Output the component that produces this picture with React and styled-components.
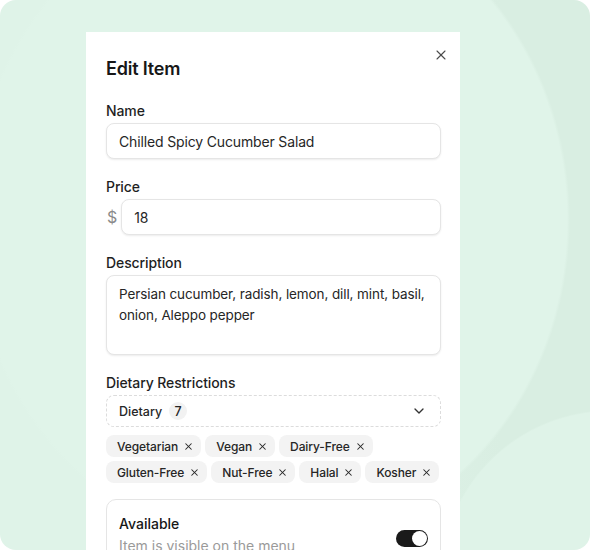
import React from "react";
import styled, { createGlobalStyle } from "styled-components";
import { X, ChevronDown } from "lucide-react";

const GlobalStyle = createGlobalStyle`
  html, body {
    margin: 0;
    padding: 0;
    background: #ffffff;
  }
  body {
    font-family: Inter, "Noto Sans", sans-serif;
    color: #171717;
    -webkit-font-smoothing: antialiased;
  }
`;

const Frame = styled.div`
  width: 590px;
  height: 550px;
  box-sizing: border-box;
  border-radius: 16px;
  overflow: hidden;
  padding: 32px 0 0 86px;
  background:
    radial-gradient(ellipse 300px 330px at 270px 220px, #e0f4e9 0 99%, transparent 100%),
    radial-gradient(circle 170px at 610px 580px, #dff3e8 0 99%, transparent 100%),
    linear-gradient(to right, #dff3e8 0 62%, #d9eee2 85%);
`;

const Dialog = styled.div`
  position: relative;
  width: 374px;
  height: 560px;
  box-sizing: border-box;
  background: #ffffff;
  padding: 23px 19px 0 20px;
  display: flex;
  flex-direction: column;
`;

const Close = styled.button`
  position: absolute;
  top: 15px;
  right: 11px;
  border: 0;
  background: none;
  padding: 0;
  display: flex;
  color: #4a4a4a;
  cursor: pointer;
`;

const Title = styled.h2`
  margin: 0 0 18px;
  font-size: 18px;
  line-height: 28px;
  font-weight: 600;
  letter-spacing: -0.2px;
  color: #171717;
`;

const Field = styled.div`
  display: flex;
  flex-direction: column;
  gap: 2px;
  margin-bottom: ${(p) => p.$gap ?? 18}px;
`;

const Label = styled.label`
  font-size: 14px;
  line-height: 20px;
  font-weight: 500;
  letter-spacing: -0.1px;
  color: #1f1f1f;
`;

const inputBase = `
  box-sizing: border-box;
  width: 100%;
  border: 1px solid #e5e5e5;
  border-radius: 8px;
  background: #ffffff;
  box-shadow: 0 1px 2px rgba(0, 0, 0, 0.08);
  font-family: Inter, "Noto Sans", sans-serif;
  color: #262626;
  padding: 0 12px;
  outline: none;
`;

const Input = styled.input`
  ${inputBase}
  height: 36px;
  font-size: 14px;
  letter-spacing: -0.15px;
`;

const PriceRow = styled.div`
  display: flex;
  align-items: center;
  gap: 4px;
`;

const Currency = styled.span`
  font-size: 16px;
  color: #8a8a8a;
  padding-left: 1px;
`;

const TextArea = styled.textarea`
  ${inputBase}
  height: 80px;
  padding: 8px 12px;
  font-size: 13.5px;
  line-height: 21px;
  letter-spacing: -0.1px;
  resize: none;
`;

const Select = styled.div`
  box-sizing: border-box;
  height: 32px;
  border: 1px dashed #dcdcdc;
  border-radius: 8px;
  display: flex;
  align-items: center;
  padding: 0 13px 0 12px;
  gap: 7px;
  font-size: 12.5px;
  font-weight: 500;
  color: #262626;
`;

const Count = styled.span`
  width: 18px;
  height: 18px;
  border-radius: 50%;
  background: #f2f2f2;
  display: flex;
  align-items: center;
  justify-content: center;
  font-size: 12.5px;
  font-weight: 500;
`;

const Chevron = styled(ChevronDown)`
  margin-left: auto;
  color: #333;
`;

const Chips = styled.div`
  display: flex;
  flex-wrap: wrap;
  gap: 4px;
  margin: 8px 0 16px;
`;

const Chip = styled.span`
  height: 22px;
  display: inline-flex;
  align-items: center;
  gap: 5px;
  padding: 0 7px 0 11px;
  border-radius: 8px;
  background: #f3f3f3;
  font-size: 12px;
  font-weight: 500;
  letter-spacing: -0.1px;
  color: #262626;
`;

const Card = styled.div`
  box-sizing: border-box;
  border: 1px solid #e5e5e5;
  border-radius: 10px;
  padding: 14px 12px 14px 12px;
  display: flex;
  align-items: center;
  justify-content: space-between;
`;

const CardText = styled.div`
  display: flex;
  flex-direction: column;
  gap: 2px;
`;

const CardTitle = styled.span`
  font-size: 14px;
  line-height: 20px;
  font-weight: 500;
  color: #171717;
`;

const CardHint = styled.span`
  font-size: 14px;
  line-height: 20px;
  color: #9a9a9a;
`;

const Toggle = styled.span`
  width: 32px;
  height: 17px;
  border-radius: 9px;
  background: #1a1a1a;
  display: flex;
  align-items: center;
  justify-content: flex-end;
  padding: 0 1px;
  box-sizing: border-box;
  margin-top: 6px;
`;

const Knob = styled.span`
  width: 15px;
  height: 15px;
  border-radius: 50%;
  background: #ffffff;
`;

const tags = ["Vegetarian", "Vegan", "Dairy-Free", "Gluten-Free", "Nut-Free", "Halal", "Kosher"];

const App = () => {
  return (
    <>
      <GlobalStyle />
      <Frame>
        <Dialog>
          <Close aria-label="Close">
            <X size={16} strokeWidth={1.6} />
          </Close>
          <Title>Edit Item</Title>
          <Field>
            <Label>Name</Label>
            <Input defaultValue="Chilled Spicy Cucumber Salad" />
          </Field>
          <Field>
            <Label>Price</Label>
            <PriceRow>
              <Currency>$</Currency>
              <Input defaultValue="18" />
            </PriceRow>
          </Field>
          <Field>
            <Label>Description</Label>
            <TextArea defaultValue="Persian cucumber, radish, lemon, dill, mint, basil, onion, Aleppo pepper" />
          </Field>
          <Field $gap={0}>
            <Label>Dietary Restrictions</Label>
            <Select>
              Dietary
              <Count>7</Count>
              <Chevron size={16} strokeWidth={2} />
            </Select>
          </Field>
          <Chips>
            {tags.map((t) => (
              <Chip key={t}>
                {t}
                <X size={11} strokeWidth={2.2} />
              </Chip>
            ))}
          </Chips>
          <Card>
            <CardText>
              <CardTitle>Available</CardTitle>
              <CardHint>Item is visible on the menu</CardHint>
            </CardText>
            <Toggle>
              <Knob />
            </Toggle>
          </Card>
        </Dialog>
      </Frame>
    </>
  );
};

export default App;
